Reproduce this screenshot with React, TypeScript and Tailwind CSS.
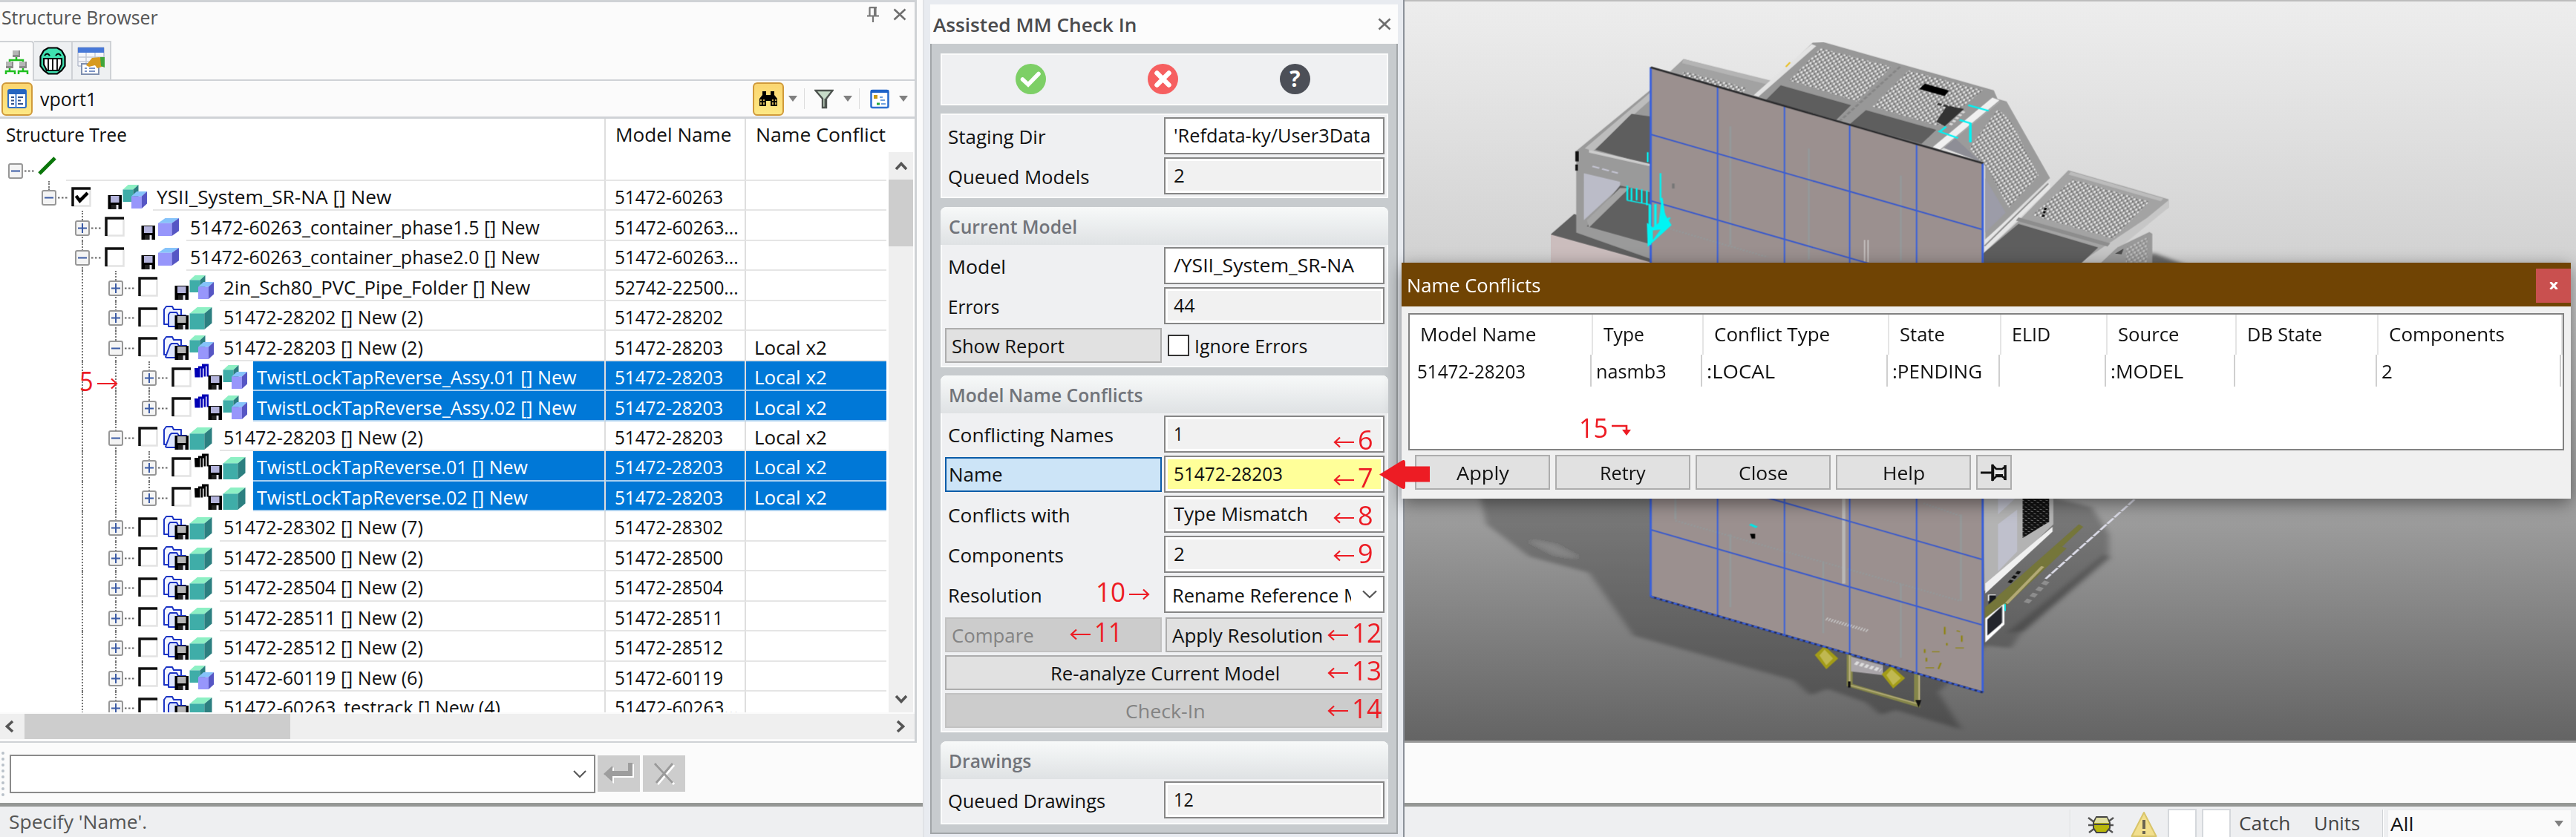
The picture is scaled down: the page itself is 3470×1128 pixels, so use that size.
import { useLayoutEffect, useRef, useState } from "react";
import type { ReactNode } from "react";

/* A single line of text condensed or widened to an exact width. */
function T({ w, children, className = "" }: { w: number; children: string; className?: string }) {
  const ref = useRef<HTMLSpanElement>(null);
  const [k, setK] = useState(1);
  useLayoutEffect(() => {
    const el = ref.current;
    if (el && el.offsetWidth) setK((w + 2) / el.offsetWidth);
  }, [w, children]);
  return (
    <span className={"block shrink-0 whitespace-pre text-[26px] leading-9 " + className} style={{ width: w }}>
      <span ref={ref} className="-ml-px inline-block origin-left" style={{ transform: `scaleX(${k})` }}>
        {children}
      </span>
    </span>
  );
}

function Chevron({ className, color = "#555" }: { className: string; color?: string }) {
  return (
    <svg viewBox="0 0 18 12" className={"h-3 w-[18px] " + className}>
      <path d="M2 2L9 9.500L16 2" fill="none" stroke={color} strokeWidth="3.600" />
    </svg>
  );
}

function Caret() {
  return (
    <svg viewBox="0 0 12 8" className="h-2 w-3">
      <path d="M0 0H12L6 8Z" fill="#808080" />
    </svg>
  );
}

function Cross({ className }: { className: string }) {
  return (
    <svg viewBox="0 0 18 17" className={"h-[17px] w-[18px] " + className}>
      <path d="M1.500 1.500L16.500 15.500M16.500 1.500L1.500 15.500" stroke="#6e6e6e" strokeWidth="2.600" />
    </svg>
  );
}

/* ---------- Structure browser ---------- */

type IconKind = "asm" | "part" | "blue" | "groupAsm" | "groupPart" | "copyAsm" | "copyPart";
type Row = {
  lv: number;
  exp: "+" | "-";
  icon: IconKind;
  name: string;
  nw: number;
  model: string;
  mw?: number;
  conflict?: boolean;
  sel?: boolean;
  last?: boolean;
  open?: boolean;
  checked?: boolean;
};

const rows: Row[] = [
  { lv: 1, exp: "-", icon: "asm", name: "YSII_System_SR-NA [] New", nw: 314, model: "51472-60263", checked: true, last: true },
  { lv: 2, exp: "+", icon: "blue", name: "51472-60263_container_phase1.5 [] New", nw: 469, model: "51472-60263...", mw: 165 },
  { lv: 2, exp: "-", icon: "blue", name: "51472-60263_container_phase2.0 [] New", nw: 469, model: "51472-60263...", mw: 165 },
  { lv: 3, exp: "+", icon: "asm", name: "2in_Sch80_PVC_Pipe_Folder [] New", nw: 411, model: "52742-22500...", mw: 165 },
  { lv: 3, exp: "+", icon: "groupPart", name: "51472-28202 [] New (2)", nw: 267, model: "51472-28202" },
  { lv: 3, exp: "-", icon: "groupAsm", name: "51472-28203 [] New (2)", nw: 267, model: "51472-28203", conflict: true, open: true },
  { lv: 4, exp: "+", icon: "copyAsm", name: "TwistLockTapReverse_Assy.01 [] New", nw: 429, model: "51472-28203", conflict: true, sel: true },
  { lv: 4, exp: "+", icon: "copyAsm", name: "TwistLockTapReverse_Assy.02 [] New", nw: 429, model: "51472-28203", conflict: true, sel: true, last: true },
  { lv: 3, exp: "-", icon: "groupPart", name: "51472-28203 [] New (2)", nw: 267, model: "51472-28203", conflict: true, open: true },
  { lv: 4, exp: "+", icon: "copyPart", name: "TwistLockTapReverse.01 [] New", nw: 363, model: "51472-28203", conflict: true, sel: true },
  { lv: 4, exp: "+", icon: "copyPart", name: "TwistLockTapReverse.02 [] New", nw: 363, model: "51472-28203", conflict: true, sel: true, last: true },
  { lv: 3, exp: "+", icon: "groupPart", name: "51472-28302 [] New (7)", nw: 267, model: "51472-28302" },
  { lv: 3, exp: "+", icon: "groupPart", name: "51472-28500 [] New (2)", nw: 267, model: "51472-28500" },
  { lv: 3, exp: "+", icon: "groupPart", name: "51472-28504 [] New (2)", nw: 267, model: "51472-28504" },
  { lv: 3, exp: "+", icon: "groupPart", name: "51472-28511 [] New (2)", nw: 267, model: "51472-28511" },
  { lv: 3, exp: "+", icon: "groupPart", name: "51472-28512 [] New (2)", nw: 267, model: "51472-28512" },
  { lv: 3, exp: "+", icon: "groupAsm", name: "51472-60119 [] New (6)", nw: 267, model: "51472-60119" },
  { lv: 3, exp: "+", icon: "groupPart", name: "51472-60263_testrack [] New (4)", nw: 371, model: "51472-60263...", mw: 165 },
];

const indent = ["", "pl-[56px]", "pl-[101px]", "pl-[146px]", "pl-[191px]"];

function Expander({ kind }: { kind: "+" | "-" }) {
  return (
    <svg viewBox="0 0 36 22" className="relative mt-1.5 h-[22px] w-9 shrink-0">
      <rect x="1" y="1" width="18" height="19" rx="2" fill="#f4f4f4" stroke="#979797" strokeWidth="2" />
      <path d={kind === "+" ? "M4 10.500H16M10 4V17" : "M4 10.500H16"} stroke="#3b5ba5" strokeWidth="2" />
      <path d="M22 10.500h2.500M27 10.500h2.500M32 10.500h2.500" stroke="#666" strokeWidth="2" />
    </svg>
  );
}

function Check({ on }: { on?: boolean }) {
  return (
    <svg viewBox="0 0 27 27" className="ml-1 mt-0.5 h-[27px] w-[27px] shrink-0">
      <rect width="27" height="27" fill="#fff" />
      <path d="M25.500 1V25.500H1" fill="none" stroke="#e3e3e3" strokeWidth="2.500" />
      <path d="M2 26V2H26" fill="none" stroke="#111" strokeWidth="3.500" />
      {on && <path d="M6.500 12L11.500 18.500L22 8" fill="none" stroke="#000" strokeWidth="4.500" />}
    </svg>
  );
}

function Cube({ x, y, w, h, c }: { x: number; y: number; w: number; h: number; c: "teal" | "blue" }) {
  const d = w * 0.34;
  const e = h * 0.28;
  const [top, front, side] = c === "teal" ? ["#8df0c4", "#3fada8", "#2c7f80"] : ["#86c3fa", "#9796fb", "#5656c4"];
  return (
    <g>
      <path d={`M${x} ${y + e}L${x + d} ${y}H${x + w}L${x + w - d} ${y + e}Z`} fill={top} />
      <path d={`M${x} ${y + e}H${x + w - d}V${y + h}H${x}Z`} fill={front} />
      <path d={`M${x + w - d} ${y + e}L${x + w} ${y}V${y + h - e}L${x + w - d} ${y + h}Z`} fill={side} />
    </g>
  );
}

function RowIcons({ kind, open }: { kind: IconKind; open?: boolean }) {
  const group = kind === "groupAsm" || kind === "groupPart";
  const copy = kind === "copyAsm" || kind === "copyPart";
  const asm = kind === "asm" || kind === "groupAsm" || kind === "copyAsm";
  const stack = kind === "copyAsm" ? "#0000b4" : "#000";
  return (
    <svg viewBox="0 0 83 40" className="h-10 w-[83px] shrink-0">
      {group && (
        <g stroke="#1c34c4" strokeWidth="2" strokeLinejoin="round">
          <path d="M12 32L36 38V18L16 30Z" fill="#7d86a0" stroke="none" opacity=".6" />
          <path d="M8 31V11L11 7H19L21 11H31V31Z" fill="#f3f6ff" />
          <path d={open ? "M10 34L16 18L18 16H26L28 19H38L32 35H12Z" : "M14 34V18L16 15H25L27 19H37V34Z"} fill="#dfe7ff" />
        </g>
      )}
      {copy && (
        <path
          d="M4 9h5v-2.500h5v-3h9v17h-2.500v-14h-1.500v14h-2.500v-11h-1.500v12h-2.500v-12h-1v12h-7z"
          fill={stack}
        />
      )}
      <g transform="translate(22.500 19)">
        <rect width="18.500" height="19" fill="#000" />
        <rect x="3.500" y="1" width="11.500" height="9" fill={group ? "#b5b5b5" : "#b4b4dc"} />
        <rect x="4.500" y="13" width="6" height="6" fill="#222" />
        <rect x="11" y="13" width="3" height="6" fill="#e8e8f0" />
      </g>
      {asm && (
        <g>
          <Cube x={42.500} y={5} w={21} h={23} c="teal" />
          <Cube x={54} y={14} w={21} h={23} c="blue" />
        </g>
      )}
      {kind === "blue" && <Cube x={45} y={9} w={28} h={24} c="blue" />}
      {(kind === "groupPart" || kind === "copyPart") && <Cube x={42.500} y={8} w={30} h={30} c="teal" />}
    </svg>
  );
}

function TreeRow({ r }: { r: Row }) {
  const cell = r.sel
    ? "bg-[#0078d7] text-white border-b-2 pt-1 border-[#a9d0f0]"
    : "bg-white text-[#111] border-b-2 pt-1 border-[#e5e5e5]";
  return (
    <div className="relative flex h-[40.470px] shrink-0">
      {r.lv === 1 && <i className="absolute left-[65px] top-0 h-3 border-l-2 border-dotted border-[#777]" />}
      {r.lv >= 2 && <i className="absolute left-[110px] top-0 h-full border-l-2 border-dotted border-[#777]" />}
      {r.lv >= 3 && <i className="absolute left-[155px] top-0 h-full border-l-2 border-dotted border-[#777]" />}
      {r.lv === 4 && (
        <i className={"absolute left-[200px] top-0 border-l-2 border-dotted border-[#777] " + (r.last ? "h-1/2" : "h-full")} />
      )}
      <div className={"flex w-[814px] shrink-0 items-center " + indent[r.lv]}>
        <Expander kind={r.exp} />
        <Check on={r.checked} />
        <RowIcons kind={r.icon} open={r.open} />
        <div className={"flex h-full min-w-0 flex-1 items-center overflow-hidden pl-1.5 " + cell}>
          <T w={r.nw}>{r.name}</T>
        </div>
      </div>
      <div className={"flex w-[189px] shrink-0 items-center border-l-2 border-l-[#dedede] pl-[13px] " + cell}>
        <T w={r.mw ?? 144}>{r.model}</T>
      </div>
      <div className={"flex w-[191px] shrink-0 items-center border-l-2 border-l-[#dedede] pl-3 " + cell}>
        {r.conflict && <T w={96}>Local x2</T>}
      </div>
    </div>
  );
}

function StructureBrowser() {
  return (
    <div className="flex h-full w-[1243px] shrink-0 flex-col bg-[#fbfbfb]">
      <div className="flex h-[1001px] w-[1235px] shrink-0 flex-col border-r-3 border-t-3 border-b-2 border-[#cfd2d5]">
        <div className="flex h-[52px] shrink-0 items-start pl-[3px]">
          <T w={209} className="mt-0.5 text-[#555]">Structure Browser</T>
          <svg viewBox="0 0 18 21" className="ml-auto mt-1.5 h-[21px] w-[18px]">
            <path d="M4 1.200H14M4.500 1V12M12.500 1V12M1 12.500H17M9 13V21" fill="none" stroke="#777" strokeWidth="2.200" />
            <path d="M11.500 1V12" stroke="#777" strokeWidth="3" />
          </svg>
          <Cross className="ml-[18px] mr-[11px] mt-2" />
        </div>
        <div className="flex h-[54px] shrink-0 items-stretch">
          <div className="flex w-[46px] items-center justify-center rounded-tr border-r-2 border-t-2 border-[#cfd2d6]">
            <svg viewBox="0 0 34 33" className="h-[33px] w-[34px]">
              <path d="M17 10V14M8 18V14H26V18M3 33V29H15V33M8 24V29M20 33V29H32V33M26 24V29" fill="none" stroke="#1fbf1f" strokeWidth="2.500" />
              <path d="M12 1h10v9h-10zM3 16h10v9h-10zM21 16h10v9h-10z" fill="#8a8a8a" />
              <path d="M12 1h8v6h-8zM3 16h8v6h-8zM21 16h8v6h-8z" fill="#b5b5b5" />
            </svg>
          </div>
          <div className="flex w-[52px] items-center justify-center border-b-2 border-r-2 border-t-2 border-[#cfd2d6] bg-[#eef0f2]">
            <svg viewBox="0 0 36 38" className="h-[38px] w-9">
              <path d="M12 1.500H24L30 5L34.500 13V26L30 32L24 36.500H12L6 32L1.500 26V13L6 5Z" fill="#3fe0b0" stroke="#000" strokeWidth="2.200" />
              <path d="M7 12Q10.500 7 14 12M22 12Q25.500 7 29 12" fill="none" stroke="#000" strokeWidth="2" />
              <path d="M6 16H30V24L26 32H10L6 24Z" fill="#fff" stroke="#000" strokeWidth="2.200" />
              <path d="M12 16V32M18 16V32M24 16V32" stroke="#000" strokeWidth="1.800" />
            </svg>
          </div>
          <div className="flex w-[52px] items-center justify-center border-b-2 border-r-2 border-t-2 border-[#cfd2d6] bg-[#eef0f2]">
            <svg viewBox="0 0 38 38" className="h-[38px] w-[38px]">
              <path d="M1 1H36V26H1Z" fill="#f5f6fa" stroke="#9fa8bc" />
              <path d="M1 1H36V8H1Z" fill="#4778d8" />
              <path d="M1 14H36M1 20H36M12 8V26M24 8V26" stroke="#c3c9d6" strokeWidth="1.500" />
              <path d="M6 23H29V37H6Z" fill="#fff" stroke="#7f8faf" strokeWidth="2" />
              <path d="M10 29h3M16 29h8M10 33h3M16 33h8" stroke="#7b94c6" strokeWidth="2" />
              <path d="M12 25L20 15L30 14L36 18V26L27 29L24 25L16 27Z" fill="#d79a20" />
              <path d="M31 14L37 14V28L32 26Z" fill="#3fa53a" />
            </svg>
          </div>
          <div className="flex-1 border-b-2 border-[#cfd2d6]" />
        </div>
        <div className="flex h-[51px] shrink-0 items-center border-b-3 border-[#cfd2d6] pl-0.5">
          <span className="flex h-[45px] w-[42px] items-center justify-center rounded-md border-2 border-[#d09a3a] bg-gradient-to-b from-[#fbd671] to-[#fde884]">
            <svg viewBox="0 0 26 26" className="h-[26px] w-[26px]">
              <rect x="1" y="1" width="24" height="24" rx="2" fill="#fff" stroke="#2f6fc8" strokeWidth="2" />
              <path d="M1 1H25V7H1Z" fill="#2565c0" />
              <path d="M5 11h4M5 15.500h4M5 20h4M14 11h7M14 15.500h4M14 20h7" stroke="#33548c" strokeWidth="2" />
              <path d="M11.500 7V25" stroke="#4b84d4" strokeWidth="2" />
            </svg>
          </span>
          <T w={74} className="ml-[11px]">vport1</T>
          <div className="ml-auto flex items-center">
            <span className="flex h-[45px] w-[42px] items-center justify-center rounded-md border-2 border-[#d09a3a] bg-gradient-to-b from-[#fbd671] to-[#fde884]">
              <svg viewBox="0 0 26 20" className="h-5 w-[26px]">
                <path d="M5 0h5v5h6v-5h5v5l4 5v10h-9v-7h-6v7h-9v-10l4-5z" fill="#000" />
                <path d="M3 11v2M3 15v3M7 11v2M7 15v3M19 11v2M19 15v3M23 11v2M23 15v3" stroke="#fdda70" strokeWidth="1.600" />
              </svg>
            </span>
            <span className="ml-1.5"><Caret /></span>
            <i className="ml-[9px] mr-[13px] h-7 w-px bg-[#dcdcdc]" />
            <svg viewBox="0 0 26 27" className="h-[27px] w-[26px]">
              <path d="M1.500 2H24.500L16 13V25H11V13Z" fill="#c7dcc9" stroke="#4e5450" strokeWidth="2.400" />
              <path d="M15 13V25" stroke="#4e5450" strokeWidth="3" />
            </svg>
            <span className="ml-[13px]"><Caret /></span>
            <i className="ml-[9px] mr-[14px] h-7 w-px bg-[#dcdcdc]" />
            <svg viewBox="0 0 26 27" className="h-[27px] w-[26px]">
              <rect x="1.500" y="2" width="23" height="23" rx="2" fill="#fff" stroke="#2d6fd0" strokeWidth="2.600" />
              <path d="M1 1H25V5H1Z" fill="#1d62c8" />
              <path d="M5 8h5v5h-5z" fill="#c89a14" />
              <path d="M13 11h4M14 15h6" stroke="#6fa0e0" strokeWidth="2" />
              <path d="M9 20h4" stroke="#1fa83a" strokeWidth="3" />
              <path d="M15 20h6" stroke="#6fa0e0" strokeWidth="2" />
            </svg>
            <span className="ml-[13px] mr-[9px]"><Caret /></span>
          </div>
        </div>
        <div className="relative flex h-[800px] shrink-0 overflow-hidden bg-white">
          <div className="w-[1194px] shrink-0">
            <div className="flex h-[84px]">
              <div className="w-[814px] shrink-0">
                <div className="flex h-11 items-start pl-[9px] pt-[3px]"><T w={161}>Structure Tree</T></div>
                <div className="flex h-10 pl-[11px]">
                  <div className="mt-2.5 h-6"><Expander kind="-" /></div>
                  <svg viewBox="0 0 26 26" className="ml-1 mt-1.5 h-[26px] w-[26px]">
                    <path d="M2 24L23 3" stroke="#0a760a" strokeWidth="5" />
                  </svg>
                </div>
                <div className="-mt-0.5 ml-[89px] h-0.5 bg-[#e5e5e5]" />
              </div>
              <div className="w-[189px] shrink-0 border-b-2 border-l-2 border-b-[#e5e5e5] border-l-[#dedede] pl-[14px] pt-[3px]"><T w={155}>Model Name</T></div>
              <div className="w-[191px] shrink-0 border-b-2 border-l-2 border-b-[#e5e5e5] border-l-[#dedede] pl-[14px] pt-[3px]"><T w={173}>Name Conflict</T></div>
            </div>
            {rows.map((r, i) => <TreeRow key={i} r={r} />)}
          </div>
          <div className="ml-[3px] mt-[45px] flex w-[33px] shrink-0 flex-col items-center bg-[#efefef]">
            <Chevron className="mt-[13px] rotate-180" />
            <div className="mt-3 h-[90px] w-full bg-[#cdcdcd]" />
            <Chevron className="mb-3 mt-auto" />
          </div>
        </div>
        <div className="mt-0.5 flex h-[34px] items-center bg-[#efefef]">
          <Chevron className="ml-1 rotate-90" />
          <div className="ml-[11px] h-full w-[358px] bg-[#cdcdcd]" />
          <Chevron className="ml-auto mr-2.5 -rotate-90" />
        </div>
      </div>
      <div className="flex h-[81px] shrink-0 items-start pt-4">
        <i className="ml-0.5 mr-[7px] mt-[-4px] h-[60px] border-l-4 border-dotted border-[#b9c1c9]" />
        <div className="flex h-[52px] w-[789px] items-center justify-end border-2 border-[#8a8a8a] bg-white pr-2.5">
          <svg viewBox="0 0 18 12" className="h-3 w-[18px]"><path d="M1 2L9 10L17 2" fill="none" stroke="#555" strokeWidth="2" /></svg>
        </div>
        <div className="ml-[3px] mt-px flex h-[49px] w-[57px] items-center justify-center bg-[#cdcdcd]">
          <svg viewBox="0 0 44 30" className="h-[30px] w-11">
            <path d="M3 17L15 6V13H36V2H42V20H15V28Z" fill="#fff" />
            <path d="M1 15L13 4V11H34V0H40V18H13V26Z" fill="#9d9d9d" />
          </svg>
        </div>
        <div className="ml-1 mt-px flex h-[49px] w-[57px] items-center justify-center bg-[#cdcdcd]">
          <svg viewBox="0 0 30 32" className="h-8 w-[30px]">
            <path d="M4 4L28 30M28 4L6 30" stroke="#fff" strokeWidth="3" />
            <path d="M2 2L26 28M26 2L4 28" stroke="#9a9a9a" strokeWidth="3" />
          </svg>
        </div>
      </div>
      <div className="flex flex-1 items-center border-t-5 border-[#959795] bg-[#eeeff1] pb-0.5 pl-[13px]">
        <T w={184} className="text-[#555]">{"Specify 'Name'."}</T>
      </div>
    </div>
  );
}

/* ---------- Check-in panel ---------- */

function Field({ label, lw, value, vw, bg = "bg-[#f1f1f1]" }: { label: ReactNode; lw?: number; value: string; vw: number; bg?: string }) {
  return (
    <div className="flex h-[50px] items-center">
      <div className="flex w-[299px] shrink-0 items-center">
        {typeof label === "string" ? <T w={lw ?? 100} className="ml-[9px] mt-0.5">{label}</T> : label}
      </div>
      <div className={"flex h-[50px] w-[297px] items-center overflow-hidden border-2 border-[#868686] pl-3 pb-0.5 shadow-[inset_0_0_0_3px_#fff] " + bg}>
        <T w={vw}>{value}</T>
      </div>
    </div>
  );
}

function Section({ title, tw, className, children }: { title: string; tw: number; className: string; children: ReactNode }) {
  return (
    <div className={"rounded-t-lg bg-[#eff0f2] shadow-[inset_0_0_0_2px_#fafbfb] " + className}>
      <div className="mb-[3px] flex h-[51px] items-center rounded-t-lg bg-gradient-to-b from-[#f7f9f9] to-[#dfe2e4] pl-3">
        <T w={tw} className="font-semibold text-[#71747a]">{title}</T>
      </div>
      <div className="flex flex-col gap-1 pl-[2px]">{children}</div>
    </div>
  );
}

const btn = "flex h-[47px] shrink-0 items-center border-2 ";
const live = "border-[#adadad] bg-[#e1e1e1] text-[#111] ";
const dead = "border-[#c2c2c2] bg-[#cccccc] text-[#838383] ";

function CheckInPanel() {
  return (
    <div className="flex h-full w-[649px] shrink-0 flex-col border-x-2 border-l-[#e0e2e6] border-r-[#8c9199] bg-[#e8ebf0] pl-2 pr-[7px] pt-[6px]">
      <div className="flex h-[53px] shrink-0 items-center bg-[#fcfcfc] pl-[5px] pr-[9px]">
        <T w={272} className="font-semibold text-[#4a4a4c]">Assisted MM Check In</T>
        <Cross className="ml-auto" />
      </div>
      <div className="mb-1 flex-1 border-2 border-t-0 border-[#a1a5a8] bg-[#c7cbce] pl-3 pr-[11px] pt-[13px]">
        <div className="flex h-[70px] items-center border-2 border-[#fbfbfb] bg-[#eff0f2] pb-0.5 pl-[99px]">
          <svg viewBox="0 0 41 41" className="h-[41px] w-[41px]">
            <circle cx="20.500" cy="20.500" r="20.500" fill="#7dcf66" />
            <path d="M9.500 21L17 28L31 13.500" fill="none" stroke="#fff" strokeWidth="5.500" strokeLinecap="round" />
          </svg>
          <svg viewBox="0 0 41 41" className="ml-[137px] h-[41px] w-[41px]">
            <circle cx="20.500" cy="20.500" r="20.500" fill="#f65f60" />
            <path d="M12.500 12.500L28.500 28.500M28.500 12.500L12.500 28.500" stroke="#fff" strokeWidth="6.500" strokeLinecap="round" />
          </svg>
          <span className="ml-[137px] flex h-[41px] w-[41px] items-center justify-center rounded-full bg-[#4c4f57]">
            <span className="text-[30px] font-bold leading-none text-white">?</span>
          </span>
        </div>
        <div className="mt-[11px] flex h-[114px] flex-col gap-1 border-2 border-[#fbfbfb] bg-[#eff0f2] pt-[3px]">
          <Field label="Staging Dir" lw={130} value="'Refdata-ky/User3Data" vw={263} bg="bg-white" />
          <Field label="Queued Models" lw={188} value="2" vw={13} />
        </div>
        <Section title="Current Model" tw={171} className="mt-3 h-[216px]">
          <Field label="Model" lw={76} value="/YSII_System_SR-NA" vw={241} bg="bg-white" />
          <Field label="Errors" lw={67} value="44" vw={27} />
          <div className="mt-px flex items-center">
            <div className={btn + live + "ml-1 w-[292px] pl-2"}><T w={150}>Show Report</T></div>
            <span className="ml-2 h-[29px] w-[29px] border-2 border-[#333] bg-white" />
            <T w={150} className="ml-2">Ignore Errors</T>
          </div>
        </Section>
        <Section title="Model Name Conflicts" tw={260} className="mt-[11px] h-[481px]">
          <Field label="Conflicting Names" lw={221} value="1" vw={11} />
          <Field
            label={<div className={btn + "ml-1 w-[292px] border-[#0a5ca8] bg-[#cce4f7] pl-1"}><T w={71}>Name</T></div>}
            value="51472-28203" vw={145} bg="bg-[#ffff99]"
          />
          <Field label="Conflicts with" lw={163} value="Type Mismatch" vw={179} />
          <Field label="Components" lw={154} value="2" vw={13} />
          <div className="flex h-[50px] items-center">
            <T w={125} className="ml-[9px] mt-0.5">Resolution</T>
            <div className="ml-[165px] flex h-[50px] w-[297px] items-center border-2 border-[#868686] bg-white">
              <div className="w-[250px] overflow-hidden pl-2.5 pt-0.5"><T w={252}>Rename Reference M</T></div>
              <svg viewBox="0 0 20 12" className="ml-auto mr-2 h-3 w-5"><path d="M1 1.500L10 10L19 1.500" fill="none" stroke="#555" strokeWidth="2.200" /></svg>
            </div>
          </div>
          <div className="mt-0.5 flex gap-[5px] pl-1">
            <div className={btn + dead + "w-[292px] pl-2"}><T w={109}>Compare</T></div>
            <div className={btn + live + "w-[292px] pl-2"}><T w={201}>Apply Resolution</T></div>
          </div>
          <div className={btn + live + "ml-1 w-[589px] justify-center pl-1"}><T w={307}>Re-analyze Current Model</T></div>
          <div className={btn + dead + "ml-1 w-[589px] justify-center pl-1"}><T w={106}>Check-In</T></div>
        </Section>
        <Section title="Drawings" tw={109} className="mt-3 h-[112px]">
          <Field label="Queued Drawings" lw={210} value="12" vw={25} />
        </Section>
      </div>
    </div>
  );
}

/* ---------- 3D viewport ---------- */

const diag = [423, 692, 961, 1230, 1499, 1757, 2022];

function Scene() {
  return (
    <svg viewBox="0 0 1578 996" className="block h-[996px] w-[1578px]">
      <defs>
        <pattern id="mesh" width="13" height="20" patternUnits="userSpaceOnUse" patternTransform="rotate(12)">
          <rect width="13" height="20" fill="#989898" />
          <ellipse cx="4" cy="5.500" rx="2.600" ry="4.600" fill="#ededed" />
          <ellipse cx="10.500" cy="15.500" rx="2.600" ry="4.600" fill="#e6e6e6" />
          <path d="M7.500 3h2v6h-2zM2 13h2v6h-2z" fill="#5c5c5c" />
        </pattern>
        <pattern id="grille" width="14" height="18" patternUnits="userSpaceOnUse">
          <rect width="14" height="18" fill="#111" />
          <path d="M1 2l5 4M8 12l5 3" stroke="#aaa" strokeWidth="2" />
        </pattern>
        <filter id="soft"><feGaussianBlur stdDeviation="7" /></filter>
      </defs>
      <g transform="translate(168 38) scale(.574 .3333)">
        {/* ground shadow */}
        <g filter="url(#soft)">
          <path d="M-170 1500L-100 2000L0 2130L140 2195L245 2450L620 2630L660 2690L700 2665L790 2720L825 2770L860 2750L1015 2830L960 2680L1070 2490L1130 2500L1150 2450L1360 2130L1360 2040L1320 1930L1200 1880L1100 1500Z" fill="#000" opacity=".24" />
          <path d="M0 2065L60 2085L115 2135L60 2120Z" fill="#fff" opacity=".15" />
          <path d="M1120 2440L1350 2120L1365 2135L1160 2430Z" fill="#000" opacity=".2" />
          <path d="M1460 900L1540 950L1500 980H1420Z" fill="#000" opacity=".5" />
        </g>
        {/* left wing */}
        <path d="M50 828L105 745L290 830V960H50Z" fill="#5f5f5f" />
        <path d="M50 828L285 940V1000H50Z" fill="#cbbdbd" />
        <path d="M110 490L290 235V930L110 820Z" fill="#9a9a9a" />
        <path d="M130 480L290 245V275L150 490Z" fill="#bdbdbd" />
        <path d="M155 485L240 340L290 352V550Z" fill="#5e5e5e" />
        <path d="M128 580L213 615V635L128 770Z" fill="#bbbcc8" />
        <path d="M213 630L290 660V870L135 795Z" fill="#606060" />
        <path d="M135 770L213 640L235 640L140 800Z" fill="#a5a5a5" />
        <path d="M140 485L290 545V555L140 497Z" fill="#ccc" />
        <path d="M148 552L208 580" stroke="#c4c4d2" strokeWidth="6" strokeDasharray="18 7" />
        <path d="M108 492h8v40h-8zM108 545h6v25h-6z" fill="#111" />
        {/* rear plate */}
        <path d="M330 170L362 118L568 212L530 280L440 240Z" fill="#a2a2a2" />
        <path d="M362 168L510 235L495 270L355 195Z" fill="url(#mesh)" />
        <path d="M362 118L568 206L560 222L358 135Z" fill="#b4b4b4" />
        {/* roof */}
        <path d="M665 52L690 50L1090 245L1100 285L960 490L530 275Z" fill="#989898" />
        <path d="M684 75L850 150L770 290L610 205Z" fill="url(#mesh)" />
        <path d="M890 165L1065 245L960 390L805 310Z" fill="url(#mesh)" />
        <path d="M590 225L755 305L720 365L555 285Z" fill="#5e5e5e" />
        <path d="M790 325L955 405L920 462L752 382Z" fill="#5e5e5e" />
        <path d="M870 150L728 370" stroke="#858585" strokeWidth="6" strokeDasharray="12 6" />
        <path d="M668 62L532 268" stroke="#e3e3e3" strokeWidth="13" />
        <path d="M602 150L612 132" stroke="#e9be1c" strokeWidth="4" />
        <path d="M928 218L985 246L975 268L915 240Z" fill="#000" />
        <path d="M980 308L1020 320L975 390L955 372Z" fill="#333" />
        <path d="M958 300L1000 318" stroke="#333" strokeWidth="8" strokeDasharray="10 5" />
        <path d="M1020 330L985 390" stroke="#d8d8d8" strokeWidth="8" strokeDasharray="8 6" />
        {/* right side */}
        <path d="M1100 280L1120 290L1222 600L1070 850V540L960 470Z" fill="#9b9b9b" />
        <path d="M1100 320L1130 370L1195 590L1125 720L1075 560L1032 480Z" fill="url(#mesh)" />
        <path d="M1070 600L1118 740L1070 820Z" fill="#9c9ca8" />
        <path d="M962 470L1000 440L1060 535Z" fill="#8e8e96" />
        <path d="M1095 280L955 480" stroke="#f0f0f0" strokeWidth="20" />
        <path d="M1104 290L962 490" stroke="#aaa" strokeWidth="3" />
        <path d="M1030 305L1078 328M960 410L1006 438M1010 365L1035 378V455M978 392L965 410" fill="none" stroke="#00f4f4" strokeWidth="6" />
        <path d="M1222 618L1068 850V900L1222 640Z" fill="#e6e6e6" />
        <path d="M1218 622L1068 875" stroke="#8d8d8d" strokeWidth="4" />
        {/* right wing */}
        <path d="M1265 568L1500 685L1500 720L1300 945H1065L1068 900L1150 770Z" fill="#a3a3a3" />
        <path d="M1275 605L1455 695L1370 845L1180 750Z" fill="url(#mesh)" />
        <path d="M1268 580L1485 688" stroke="#bcbcbc" strokeWidth="13" />
        <path d="M1500 690V720L1340 945H1290L1450 760Z" fill="#c6c6c6" />
        <path d="M1148 785L1335 880L1295 945H1065V905Z" fill="#5e5e5e" />
        <path d="M1145 765L1360 870" stroke="#8d8d8d" strokeWidth="14" />
        <path d="M1455 818L1462 825V945H1340L1380 880Z" fill="#999" />
        <path d="M1400 880L1450 840V940H1400Z" fill="url(#mesh)" opacity=".5" />
        <path d="M1375 905L1395 885L1390 908Z" fill="#4c4c4c" />
        <path d="M1212 720L1205 760" stroke="#111" strokeWidth="6" strokeDasharray="9 5" />
        {/* lower right machinery */}
        <path d="M1065 1890H1230V2000L1068 2270Z" fill="#b3b3b3" />
        <path d="M1100 1896H1140L1100 1960ZM1100 2000L1145 1940V2110L1100 2190Z" fill="#bfc0cc" />
        <path d="M1158 1896H1220V1990L1158 2055Z" fill="url(#grille)" />
        <path d="M1228 2010V2030L1070 2280V2240Z" fill="#f0f0f0" />
        <path d="M1420 1900L1212 2220" stroke="#dcdce8" strokeWidth="6" strokeDasharray="26 4" />
        <path d="M1300 2010L1070 2385V2335L1290 2000Z" fill="#75763a" />
        <path d="M1250 2090L1100 2335" stroke="#75763a" strokeWidth="26" />
        <path d="M1205 2170L1120 2320" stroke="#b3aa76" strokeWidth="8" />
        <path d="M1150 2190L1125 2240" stroke="#111" strokeWidth="9" strokeDasharray="12 8" />
        <path d="M1215 2230L1165 2320" stroke="#a7a7a7" strokeWidth="14" strokeDasharray="16 12" opacity=".6" />
        <path d="M1070 2380L1115 2320V2405L1070 2478Z" fill="#fff" />
        <path d="M1075 2385L1110 2330V2398L1075 2450Z" fill="#23252c" />
        <path d="M1078 2285h17v14l-17 24z" fill="#15181f" />
        <path d="M1078 2310V2286H1095" fill="none" stroke="#fff" strokeWidth="3" />
        <path d="M1117 2322V2350" stroke="#00e5e5" strokeWidth="4" />
        {/* bottom hitch */}
        <path d="M752 2500V2650L910 2730V2580" fill="none" stroke="#85864a" strokeWidth="14" />
        <path d="M752 2650L910 2725M915 2590V2720M752 2520V2645" stroke="#b9b07e" strokeWidth="4" />
        <path d="M755 2535L830 2570V2610L755 2595Z" fill="#aaa6aa" />
        <path d="M765 2560L825 2590" stroke="#ddd" strokeWidth="14" strokeDasharray="8 5" />
        <path d="M748 2635h6v25h-6zM906 2710h14l-6 32z" fill="#111" />
        <path d="M693 2492L725 2542L697 2586L670 2528Z" fill="#a39c17" />
        <path d="M693 2506L713 2542L697 2570L681 2530Z" fill="#c0b851" />
        <path d="M850 2572L882 2622L854 2664L827 2606Z" fill="#a39c17" />
        <path d="M850 2586L872 2622L854 2650L838 2610Z" fill="#c0b851" />
        {/* section plane */}
        <path d="M285 152L1065 540V2680L285 2292Z" fill="#9b908f" />
        <path d="M472 390V870M656 480V930M872 590V935M472 2040V2335M690 2150V2440M872 2240V2540M1013 1960V2310M343 1890V1980" stroke="#95999a" strokeWidth="5" />
        <path d="M343 1985L1013 2310M330 805L560 920M925 1915L1010 1965" stroke="#95999a" strokeWidth="7" strokeDasharray="4 4" />
        <path d="M738 1896V2240" stroke="#b9b7b5" strokeWidth="8" />
        <path d="M787 850V940M795 850V940" stroke="#c8c5c4" strokeWidth="3" />
        <path d="M697 2382L797 2432" stroke="#c9c9c9" strokeWidth="12" strokeDasharray="3 4" />
        <path d="M975 2415V2445M1003 2430l8 4M1015 2450v25M980 2480v10M1000 2500h20M928 2505v15M945 2515h18M932 2540v15M966 2560l-6 25M930 2580h20" fill="none" stroke="#8f8512" strokeWidth="4" />
        <path d="M518 2000L534 2012" stroke="#00e5e5" strokeWidth="8" />
        <path d="M518 2038h12v20h-8z" fill="#000" />
        <path d="M338 622v20" stroke="#777" strokeWidth="6" />
        {diag.map((y) => (
          <path key={y} d={`M285 ${y}L1065 ${y + 386}`} stroke="#3557cf" strokeWidth="5" />
        ))}
        <path d="M442 230V2370M599 308V2448M752 384V2524M909 462V2602" stroke="#3960dc" strokeWidth="3.400" />
        <path d="M285 152V2292M1064 540V2680" stroke="#3960dc" strokeWidth="5" />
        <path d="M285 152L1065 540" stroke="#2c2c2e" strokeWidth="7" />
        <path d="M285 2292L1065 2680" stroke="#1f2a5c" strokeWidth="7" />
        <path d="M285 2292L1065 2680" stroke="#3960dc" strokeWidth="6" strokeDasharray="9 6" />
        {/* cabling */}
        <path d="M278 495V535M308 580V690M230 630V690M240 640V690M252 640V690M264 645V700M276 650V710M230 690L285 708" fill="none" stroke="#00f4f4" strokeWidth="4" />
        <path d="M283 708V870M296 705V800M310 680L318 780L330 760" fill="none" stroke="#00f4f4" strokeWidth="6" />
        <path d="M276 780L290 800L304 780L310 690L320 750L334 790L278 878Z" fill="#00f4f4" />
        <path d="M290 850V812L308 808Z" fill="#9b908f" />
      </g>
    </svg>
  );
}

function Viewport() {
  return (
    <div className="flex h-full w-[1578px] shrink-0 flex-col">
      <div className="h-0.5 shrink-0 bg-[#bdbdbd]" />
      <div className="h-[996px] shrink-0 overflow-hidden bg-[linear-gradient(#ededed_0%,#d2d2d2_35%,#a0a0a0_68%,#646464_100%)]">
        <Scene />
      </div>
      <div className="h-[84px] shrink-0 border-t-3 border-[#999] bg-[#fbfbfb]" />
      <div className="flex flex-1 border-t-5 border-[#959795] bg-[#eeeff1]">
        <i className="ml-[896px] mt-1 w-0.5 border-l border-[#cfd2d5] bg-white" />
        <svg viewBox="0 0 36 23" className="ml-[22px] mt-[13px] h-[23px] w-9">
          <path d="M1 2L9 8L27 8L35 2M1 12H35M2 22L10 16M34 22L26 16" fill="none" stroke="#555" strokeWidth="2.500" />
          <path d="M12 1H26L30 9V16L25 22H12L8 16V8Z" fill="#b9b70b" stroke="#444" strokeWidth="2" />
          <path d="M12 2H26L29 9H9Z" fill="#e0dfa0" />
          <path d="M8 11H30" stroke="#444" strokeWidth="2" />
        </svg>
        <svg viewBox="0 0 36 35" className="ml-[22px] mt-[6px] h-[35px] w-9">
          <path d="M18 2L34.500 34H1.500Z" fill="#f2df8d" stroke="#d8c46a" strokeWidth="2" strokeLinejoin="round" />
          <path d="M18 12V24M18 27V31" stroke="#6a6450" strokeWidth="4" />
        </svg>
        <i className="ml-[14px] mt-[3px] w-[39px] border-2 border-b-0 border-[#d5d8dc] bg-white" />
        <i className="ml-[7px] mt-[3px] w-[39px] border-2 border-b-0 border-[#d5d8dc] bg-white" />
        <T w={68} className="ml-[12px] mt-1 text-[#444]">Catch</T>
        <T w={60} className="ml-[33px] mt-1 text-[#444]">Units</T>
        <i className="ml-[31px] mt-1 w-0.5 border-l border-[#cfd2d5] bg-white" />
        <div className="ml-1 mt-[3px] flex w-[250px] items-start border-2 border-b-0 border-[#eceef0] bg-[#fafafa] pl-1">
          <T w={30}>All</T>
          <span className="ml-auto mr-2.5 mt-[14px] flex"><Caret /></span>
        </div>
      </div>
    </div>
  );
}

/* ---------- Name Conflicts dialog ---------- */

const cols: { h: string; hw: number; v: string; vw: number; c: string }[] = [
  { h: "Model Name", hw: 155, v: "51472-28203", vw: 144, c: "w-[247px]" },
  { h: "Type", hw: 53, v: "nasmb3", vw: 93, c: "w-[149px]" },
  { h: "Conflict Type", hw: 154, v: ":LOCAL", vw: 90, c: "w-[250px]" },
  { h: "State", hw: 59, v: ":PENDING", vw: 119, c: "w-[151px]" },
  { h: "ELID", hw: 50, v: "", vw: 0, c: "w-[143px]" },
  { h: "Source", hw: 81, v: ":MODEL", vw: 96, c: "w-[174px]" },
  { h: "DB State", hw: 99, v: "", vw: 0, c: "w-[191px]" },
  { h: "Components", hw: 154, v: "2", vw: 13, c: "w-[248px]" },
];

function Dialog() {
  return (
    <div className="absolute left-[1888px] top-[354px] flex h-[318px] w-[1575px] flex-col bg-[#f0f0f0] shadow-[0_6px_22px_rgba(0,0,0,0.45)]">
      <div className="flex h-[59px] shrink-0 items-start bg-[#704404] pl-2">
        <T w={178} className="mt-3 text-white">Name Conflicts</T>
        <span className="ml-auto mt-2 flex h-[46px] w-[47px] items-center justify-center bg-[#c9504f]">
          <svg viewBox="0 0 12 10" className="h-2.5 w-3"><path d="M1.500 0L10.500 10M10.500 0L1.500 10" stroke="#fff" strokeWidth="3" /></svg>
        </span>
      </div>
      <div className="ml-[9px] mt-[9px] h-[185px] w-[1557px] shrink-0 border-2 border-[#828282] bg-white">
        <div className="flex h-[54px]">
          {cols.map((c) => (
            <div key={c.h} className={"flex shrink-0 items-center border-r-2 border-[#e5e5e5] pb-0.5 pl-[15px] " + c.c}><T w={c.hw}>{c.h}</T></div>
          ))}
        </div>
        <div className="-ml-0.5 flex h-[43px]">
          {cols.map((c, i) => (
            <div key={c.h} className={"flex shrink-0 items-center border-r-2 border-[#cfcfcf] " + (i ? "pl-[7px] " : "pl-[13px] ") + c.c}>
              {c.v && <T w={c.vw}>{c.v}</T>}
            </div>
          ))}
        </div>
      </div>
      <div className="ml-[18px] mt-[6px] flex gap-[7px]">
        <div className={btn + live + "w-[182px] justify-center"}><T w={69}>Apply</T></div>
        <div className={btn + live + "w-[182px] justify-center"}><T w={60}>Retry</T></div>
        <div className={btn + live + "w-[182px] justify-center"}><T w={65}>Close</T></div>
        <div className={btn + live + "w-[182px] justify-center"}><T w={55}>Help</T></div>
        <div className={btn + live + "w-[48px] justify-center"}>
          <svg viewBox="0 0 36 24" className="h-6 w-9">
            <path d="M0 12H15" stroke="#111" strokeWidth="3" />
            <path d="M16 1V23M33 2V22" stroke="#111" strokeWidth="3.500" />
            <path d="M17 3L21 7H29L33 4V20L29 17H21L17 21Z" fill="#e6e6e6" stroke="#111" strokeWidth="2.500" />
            <path d="M20 16H30" stroke="#111" strokeWidth="4" />
          </svg>
        </div>
      </div>
    </div>
  );
}

/* ---------- Callouts ---------- */

function Note({ n, w, dir, className }: { n: string; w: number; dir: "l" | "r" | "d"; className: string }) {
  const arrow = (
    <svg viewBox="0 0 28 16" className={"h-4 w-7 " + (dir === "r" ? "rotate-180" : "")}>
      <path d="M28 8H2M9 1.500L2 8L9 14.500" fill="none" stroke="#ed1c24" strokeWidth="2.200" />
    </svg>
  );
  return (
    <div className={"absolute flex h-9 items-center text-[#ed1c24] " + className}>
      {dir === "l" && arrow}
      <T w={w} className="mx-1.5 -mt-1.5 text-[36px]!">{n}</T>
      {dir === "r" && arrow}
      {dir === "d" && (
        <svg viewBox="0 0 28 18" className="h-[18px] w-7">
          <path d="M0 3H20V10" fill="none" stroke="#ed1c24" strokeWidth="2.600" />
          <path d="M14 8H26L20 16Z" fill="#ed1c24" />
        </svg>
      )}
    </div>
  );
}

export default function App() {
  return (
    <div className="relative flex h-[1128px] w-[3470px] overflow-hidden bg-[#fbfbfb] font-['Open_Sans','Noto_Sans',sans-serif] text-[#111]">
      <StructureBrowser />
      <CheckInPanel />
      <Viewport />
      <Dialog />
      <Note n="5" w={17} dir="r" className="left-[102px] top-[499px]" />
      <Note n="6" w={19} dir="l" className="left-[1796px] top-[578px]" />
      <Note n="7" w={19} dir="l" className="left-[1796px] top-[629px]" />
      <Note n="8" w={19} dir="l" className="left-[1796px] top-[680px]" />
      <Note n="9" w={19} dir="l" className="left-[1796px] top-[731px]" />
      <Note n="10" w={38} dir="r" className="left-[1471px] top-[783px]" />
      <Note n="11" w={36} dir="l" className="left-[1441px] top-[837px]" />
      <Note n="12" w={38} dir="l" className="left-[1788px] top-[838px]" />
      <Note n="13" w={38} dir="l" className="left-[1788px] top-[889px]" />
      <Note n="14" w={38} dir="l" className="left-[1788px] top-[940px]" />
      <Note n="15" w={37} dir="d" className="left-[2122px] top-[562px]" />
      <svg viewBox="0 0 68 41" className="absolute left-[1858px] top-[619px] h-[41px] w-[68px]">
        <path d="M0 20.500L30 2Q35 -1 35 5V9.500H68V30.500H35V36Q35 42 30 39Z" fill="#ed1c24" />
      </svg>
    </div>
  );
}
